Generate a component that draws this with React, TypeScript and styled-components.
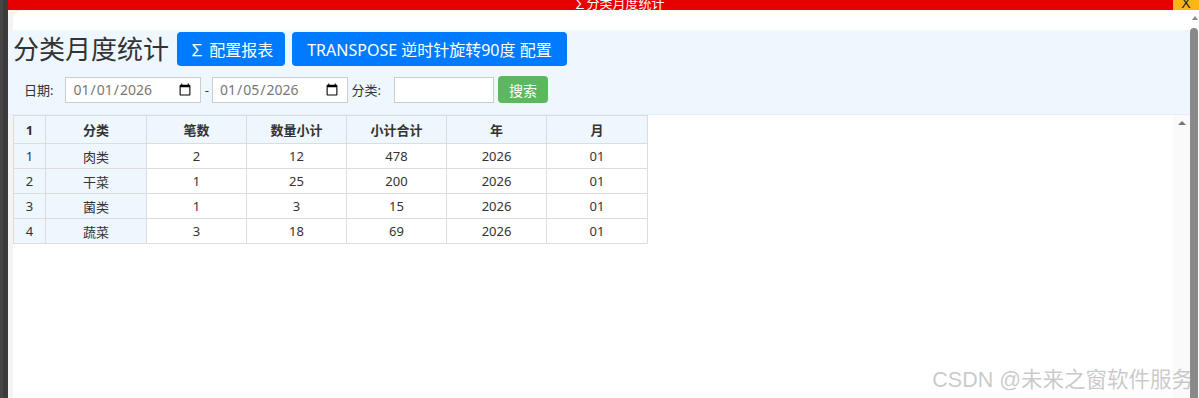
import React from "react";
import styled, { createGlobalStyle } from "styled-components";

const GlobalStyle = createGlobalStyle`
  html, body {
    margin: 0;
    padding: 0;
    background: #3d3d3d;
  }
  body {
    font-family: "Noto Sans", "Noto Sans CJK SC", sans-serif;
  }
`;

const columns = ["1", "分类", "笔数", "数量小计", "小计合计", "年", "月"];
const widths = [32, 101, 100, 100, 100, 100, 101];

const rows = [
  [1, "肉类", 2, 12, 478, 2026, "01"],
  [2, "干菜", 1, 25, 200, 2026, "01"],
  [3, "菌类", 1, 3, 15, 2026, "01"],
  [4, "蔬菜", 3, 18, 69, 2026, "01"],
];

export default function App() {
  return (
    <>
      <GlobalStyle />
      <Screen>
        <Backdrop />
        <Window>
          <TitleBar>
            <WindowTitle>∑分类月度统计</WindowTitle>
            <CloseButton>X</CloseButton>
          </TitleBar>
          <WindowBody>
            <Frame>
              <TopCap />
              <Panel>
                <HeaderRow>
                  <PageTitle>分类月度统计</PageTitle>
                  <PrimaryButton $pad={12}>∑ 配置报表</PrimaryButton>
                  <PrimaryButton $pad={15}>TRANSPOSE 逆时针旋转90度 配置</PrimaryButton>
                </HeaderRow>
                <FilterRow>
                  <FieldLabel $space={12}>日期:</FieldLabel>
                  <DateInput type="date" defaultValue="2026-01-01" />
                  <FieldLabel $space={3}>&nbsp;-</FieldLabel>
                  <DateInput type="date" defaultValue="2026-01-05" />
                  <FieldLabel $space={13}>&nbsp;分类:</FieldLabel>
                  <TextInput type="text" />
                  <SearchButton>搜索</SearchButton>
                </FilterRow>
              </Panel>
              <Content>
                <Main>
                  <Table>
                    <colgroup>
                      {widths.map((w, i) => (
                        <col key={i} style={{ width: w }} />
                      ))}
                    </colgroup>
                    <thead>
                      <tr>
                        {columns.map((c) => (
                          <Th key={c}>{c}</Th>
                        ))}
                      </tr>
                    </thead>
                    <tbody>
                      {rows.map((r) => (
                        <tr key={r[0]}>
                          {r.map((v, i) => (
                            <Td key={i} $frozen={i < 2}>
                              {v}
                            </Td>
                          ))}
                        </tr>
                      ))}
                    </tbody>
                  </Table>
                </Main>
                <InnerScrollbar>
                  <ArrowUp />
                </InnerScrollbar>
              </Content>
            </Frame>
            <OuterScrollbar>
              <SmallArrowUp />
              <Thumb />
            </OuterScrollbar>
          </WindowBody>
        </Window>
        <Watermark>CSDN @未来之窗软件服务</Watermark>
      </Screen>
    </>
  );
}

const Screen = styled.div`
  position: relative;
  display: flex;
  width: 1199px;
  height: 398px;
  overflow: hidden;
  background: #3d3d3d;
`;

const Backdrop = styled.div`
  width: 8px;
  flex-shrink: 0;
  background: #3b3b3b;
  border-left: 3px solid #454545;
  box-sizing: border-box;
`;

const Window = styled.div`
  flex: 1;
  min-width: 0;
  display: flex;
  flex-direction: column;
`;

const TitleBar = styled.div`
  height: 10px;
  flex-shrink: 0;
  display: flex;
`;

const WindowTitle = styled.div`
  flex: 1;
  display: flex;
  justify-content: center;
  padding-left: 57px;
  background: #e60000;
  color: #fff;
  font-size: 13px;
  line-height: 6px;
  white-space: nowrap;
  overflow: hidden;
`;

const CloseButton = styled.div`
  width: 26px;
  background: #fbb615;
  color: #222;
  font-family: "Liberation Sans", sans-serif;
  font-size: 14px;
  line-height: 6px;
  text-align: center;
  overflow: hidden;
`;

const WindowBody = styled.div`
  flex: 1;
  min-height: 0;
  display: flex;
`;

const Frame = styled.div`
  flex: 1;
  min-width: 0;
  display: flex;
  flex-direction: column;
  background: #f4f4f4;
`;

const TopCap = styled.div`
  height: 20px;
  flex-shrink: 0;
  margin-left: 5px;
  background: #fff;
  border-top-left-radius: 10px;
`;

const Panel = styled.div`
  flex-shrink: 0;
  display: flex;
  flex-direction: column;
  gap: 10px;
  padding: 2px 0 11px 5px;
  background: #eef6fe;
  border-bottom: 1px solid #e4eefa;
`;

const HeaderRow = styled.div`
  display: flex;
  align-items: center;
  gap: 7px;
`;

const PageTitle = styled.h1`
  margin: 0 1px 0 0;
  font-size: 26px;
  font-weight: normal;
  line-height: 34px;
  color: #333;
`;

const PrimaryButton = styled.button<{ $pad: number }>`
  height: 34px;
  padding: 0 ${(p) => p.$pad}px;
  border: none;
  border-radius: 4px;
  background: #007bff;
  color: #fff;
  font-family: "Noto Sans", "Noto Sans CJK SC", sans-serif;
  font-size: 16px;
  white-space: nowrap;
`;

const FilterRow = styled.div`
  display: flex;
  align-items: center;
  padding-left: 11px;
`;

const FieldLabel = styled.span<{ $space: number }>`
  margin-right: ${(p) => p.$space}px;
  font-size: 13px;
  color: #333;
  white-space: nowrap;
`;

const DateInput = styled.input`
  width: 136px;
  height: 26px;
  box-sizing: border-box;
  padding: 0 6px;
  border: 1px solid #ccc;
  background: #fff;
  color: #777;
  font-family: "Noto Sans", sans-serif;
  font-size: 14px;
`;

const TextInput = styled.input`
  width: 100px;
  height: 26px;
  box-sizing: border-box;
  margin-right: 4px;
  border: 1px solid #ccc;
  background: #fff;
`;

const SearchButton = styled.button`
  width: 50px;
  height: 27px;
  padding: 0;
  border: none;
  border-radius: 4px;
  background: #5cb85c;
  color: #fff;
  font-family: "Noto Sans CJK SC", sans-serif;
  font-size: 14px;
`;

const Content = styled.div`
  flex: 1;
  min-height: 0;
  display: flex;
`;

const Main = styled.div`
  flex: 1;
  margin-left: 5px;
  background: #fff;
`;

const Table = styled.table`
  width: 634px;
  table-layout: fixed;
  border-collapse: collapse;
  font-size: 13px;
  color: #333;
`;

const Th = styled.th`
  height: 27px;
  padding: 0;
  border: 1px solid #ddd;
  background: #eef6fe;
  font-weight: bold;
  text-align: center;
`;

const Td = styled.td<{ $frozen: boolean }>`
  height: 24px;
  padding: 0;
  border: 1px solid #ddd;
  background: ${(p) => (p.$frozen ? "#eef6fe" : "#fff")};
  text-align: center;
`;

const InnerScrollbar = styled.div`
  width: 17px;
  flex-shrink: 0;
  display: flex;
  flex-direction: column;
  align-items: center;
  padding-top: 6px;
  box-sizing: border-box;
  background: #fafafa;
`;

const ArrowUp = styled.div`
  width: 0;
  height: 0;
  border-left: 4px solid transparent;
  border-right: 4px solid transparent;
  border-bottom: 4px solid #777;
`;

const OuterScrollbar = styled.div`
  width: 9px;
  flex-shrink: 0;
  display: flex;
  flex-direction: column;
  align-items: center;
  padding-top: 6px;
  box-sizing: border-box;
  background: #fff;
`;

const SmallArrowUp = styled.div`
  width: 0;
  height: 0;
  border-left: 3px solid transparent;
  border-right: 3px solid transparent;
  border-bottom: 4px solid #888;
`;

const Thumb = styled.div`
  flex: 1;
  align-self: stretch;
  margin: 8px 1px 0 0;
  border-radius: 4px 4px 0 0;
  background: #8a8a8a;
`;

const Watermark = styled.div`
  position: absolute;
  right: 6px;
  bottom: 6px;
  font-family: "Liberation Sans", "Noto Sans CJK SC", sans-serif;
  font-size: 21.5px;
  line-height: 24px;
  color: rgba(150, 150, 150, 0.5);
  white-space: nowrap;
  pointer-events: none;
`;
